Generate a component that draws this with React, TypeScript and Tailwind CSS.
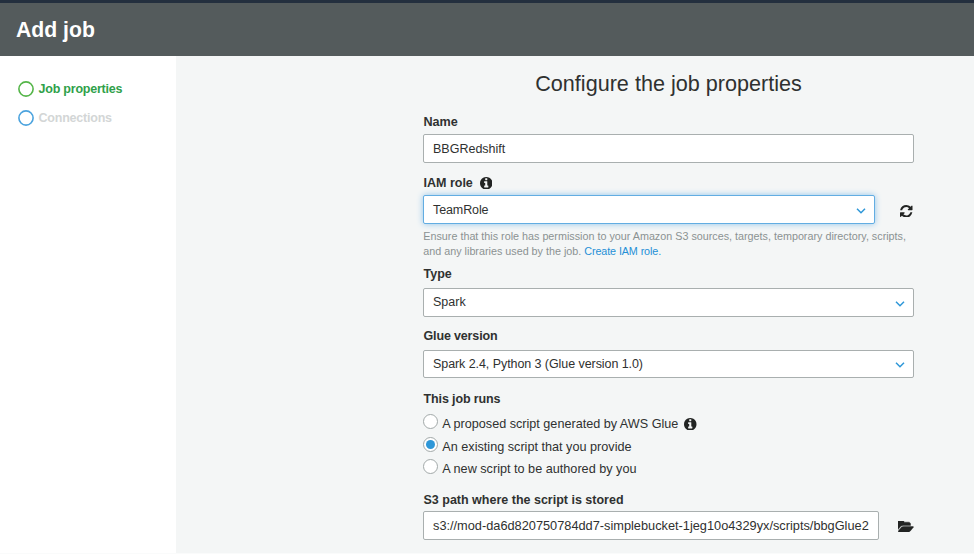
import type { ReactNode } from "react";

function InfoIcon() {
  return (
    <svg viewBox="0 128 1536 1536" className="size-[12.5px] shrink-0 fill-[#222423]">
      <path d="M1024 1376v-160q0-14-9-23t-23-9h-96v-512q0-14-9-23t-23-9h-320q-14 0-23 9t-9 23v160q0 14 9 23t23 9h96v320h-96q-14 0-23 9t-9 23v160q0 14 9 23t23 9h448q14 0 23-9t9-23zm-128-896v-160q0-14-9-23t-23-9h-192q-14 0-23 9t-9 23v160q0 14 9 23t23 9h192q14 0 23-9t9-23zm640 416q0 209-103 385.5t-279.5 279.5-385.5 103-385.5-103-279.5-279.5-103-385.5 103-385.5 279.5-279.5 385.5-103 385.5 103 279.5 279.5 103 385.5z" />
    </svg>
  );
}

function RefreshIcon() {
  return (
    <svg viewBox="0 128 1536 1536" className="size-[12.5px] shrink-0 fill-[#222423]">
      <path d="M1511 1056q0 5-1 7-64 268-268 434.5t-478 166.5q-146 0-282.5-55t-243.5-157l-129 129q-19 19-45 19t-45-19-19-45v-448q0-26 19-45t45-19h448q26 0 45 19t19 45-19 45l-137 137q71 66 161 102t187 36q134 0 250-65t186-179q11-17 53-117 8-23 30-23h192q13 0 22.5 9.5t9.5 22.5zm25-800v448q0 26-19 45t-45 19h-448q-26 0-45-19t-19-45 19-45l138-138q-148-137-349-137-134 0-250 65t-186 179q-11 17-53 117-8 23-30 23h-199q-13 0-22.5-9.5t-9.5-22.5v-7q65-268 270-434.5t480-166.5q146 0 284 55.5t245 156.5l130-129q19-19 45-19t45 19 19 45z" />
    </svg>
  );
}

function FolderIcon() {
  return (
    <svg viewBox="0 256 1820 1280" className="h-[11px] w-[15.5px] shrink-0 fill-[#222423] stroke-[#222423]" strokeWidth="50">
      <path d="M1815 952q0 31-31 66l-336 396q-43 51-120.5 86.5t-143.5 35.5h-1088q-34 0-60.5-13t-26.5-43q0-31 31-66l336-396q43-51 120.5-86.5t143.5-35.5h1088q34 0 60.5 13t26.5 43zm-343-344v160h-832q-94 0-197 47.5t-164 119.5l-337 396-5 6q0-4-.5-12.5t-.5-12.5v-960q0-92 66-158t158-66h320q92 0 158 66t66 158v32h544q92 0 158 66t66 158z" />
    </svg>
  );
}

function Chevron() {
  return (
    <svg viewBox="0 0 10 6" className="mt-0.5 h-1.5 w-2.5 shrink-0">
      <path d="M1 .8 5 4.8 9 .8" fill="none" stroke="#2e97d8" strokeWidth="1.5" />
    </svg>
  );
}

function Label({ className, children }: { className: string; children: ReactNode }) {
  return <div className={`flex h-4 items-center gap-[7px] pl-[0.5px] font-bold leading-4 ${className}`}>{children}</div>;
}

function Field({ className, select, children }: { className: string; select?: boolean; children: ReactNode }) {
  return (
    <div className={`flex items-center justify-between whitespace-nowrap rounded-[2px] border bg-white pl-[9px] pr-2 ${className}`}>
      <span>{children}</span>
      {select && <Chevron />}
    </div>
  );
}

function Radio({ className, checked, children }: { className: string; checked?: boolean; children: ReactNode }) {
  return (
    <div className={`flex items-start gap-1 pl-[0.3px] ${className}`}>
      <span className="flex size-[15px] shrink-0 items-center justify-center rounded-full border border-[#a2a9a9] bg-white">
        {checked && <span className="size-[9px] rounded-full bg-[#2e97d8]" />}
      </span>
      <span className="flex items-center gap-1.5 pt-0.5 leading-4">{children}</span>
    </div>
  );
}

function StepCircle({ className }: { className: string }) {
  return (
    <svg viewBox="0 0 16 16" className={`size-4 shrink-0 fill-none ${className}`}>
      <circle cx="8" cy="8" r="7.1" strokeWidth="1.6" />
    </svg>
  );
}

export default function App() {
  return (
    <div className="flex h-[554px] w-[974px] flex-col overflow-hidden bg-white font-['Liberation_Sans',Arial,sans-serif] text-[12.5px] text-[#2f3130]">
      <div className="h-[3px] bg-[#232f3e]" />
      <header className="flex h-[53px] items-center bg-[#545b5c] pl-4 text-[21.2px] font-bold text-white">Add job</header>
      <div className="flex flex-1">
        <nav className="w-44 bg-white pl-[18px] pt-[25px] font-bold leading-4 tracking-[-0.22px]">
          <div className="flex h-[29px] items-start gap-[4.5px] text-[#2fa14a]">
            <StepCircle className="stroke-[#54b548]" />
            Job properties
          </div>
          <div className="flex h-[29px] items-start gap-[4.5px] text-[#d3d6d6]">
            <StepCircle className="stroke-[#4ba3de]" />
            Connections
          </div>
        </nav>
        <main className="flex-1 bg-[#f4f6f6] pl-[247px]">
          <div className="flex w-[491px] flex-col">
            <h1 className="mb-3.5 mt-3 h-8 whitespace-nowrap text-center text-[21.6px] leading-8">
              Configure the job properties
            </h1>

            <Label className="text-[12.6px]">Name</Label>
            <Field className="mt-1 h-[29px] border-[#a9afaf] pt-0.5">BBGRedshift</Field>

            <Label className="mt-3">
              IAM role <InfoIcon />
            </Label>
            <div className="mt-1 flex items-center">
              <Field select className="h-[29px] w-[452px] border-[#62ade2] pt-px shadow-[0_0_6px_#8fc3ea] tracking-[-0.1px]">
                TeamRole
              </Field>
              <div className="ml-[25px] pt-[3px]">
                <RefreshIcon />
              </div>
            </div>
            <p className="mt-[5px] whitespace-nowrap pl-[0.3px] text-[10.77px] leading-[15px] text-[#8b9292]">
              Ensure that this role has permission to your Amazon S3 sources, targets, temporary directory, scripts,
              <br />
              and any libraries used by the job.{" "}
              <span className="tracking-[-0.1px] text-[#2490d6]">Create IAM role.</span>
            </p>

            <Label className="mt-[7px]">Type</Label>
            <Field select className="mt-1.5 h-[29px] border-[#a9afaf]">Spark</Field>

            <Label className="mt-[11px] tracking-[-0.15px]">Glue version</Label>
            <Field select className="mt-1.5 h-7 border-[#a9afaf] tracking-[-0.07px]">
              Spark 2.4, Python 3 (Glue version 1.0)
            </Field>

            <Label className="mt-[13px] tracking-[-0.12px]">This job runs</Label>
            <Radio className="mt-[7px] h-[23px] text-[12.63px]">
              A proposed script generated by AWS Glue <InfoIcon />
            </Radio>
            <Radio checked className="h-[22px] text-[12.66px]">An existing script that you provide</Radio>
            <Radio className="h-[22px] text-[12.66px]">A new script to be authored by you</Radio>

            <Label className="mt-[11px]">S3 path where the script is stored</Label>
            <div className="mt-[3px] flex items-center">
              <Field className="h-[29px] w-[456px] border-[#a9afaf] text-[12.77px]">
                s3://mod-da6d820750784dd7-simplebucket-1jeg10o4329yx/scripts/bbgGlue2
              </Field>
              <div className="ml-[19px] pt-0.5">
                <FolderIcon />
              </div>
            </div>
          </div>
        </main>
      </div>
      <div className="h-px bg-[#fafbfb]" />
    </div>
  );
}
